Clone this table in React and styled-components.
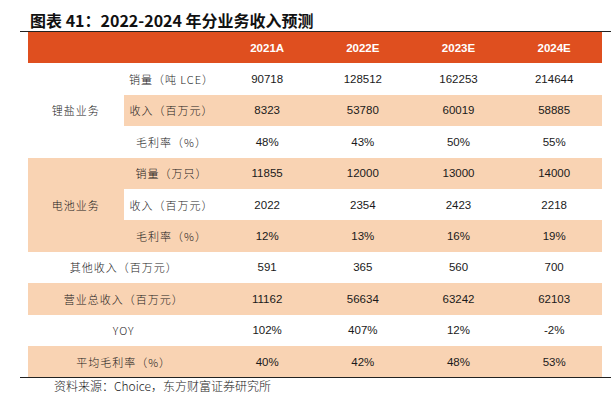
import React from 'react';
import styled, { createGlobalStyle } from 'styled-components';

const GlobalStyle = createGlobalStyle`
  body {
    margin: 0;
    background: #ffffff;
  }
`;

const Page = styled.div`
  width: 615px;
  height: 406px;
  padding-left: 20px;
  box-sizing: border-box;
`;

const Title = styled.h1`
  margin: 0;
  height: 31px;
  box-sizing: border-box;
  padding: 9px 0 0 10px;
  font-family: "Noto Sans CJK SC", "Noto Sans", sans-serif;
  font-size: 16px;
  font-weight: 700;
  line-height: 22px;
  color: #111;
  white-space: nowrap;
`;

const Frame = styled.div`
  width: 591px;
  border-top: 1px solid #222;
  border-bottom: 1px solid #222;
  padding-left: 8px;
  box-sizing: border-box;
`;

const Grid = styled.div`
  width: 574px;
  display: grid;
  grid-template-columns: repeat(6, 1fr);
  grid-auto-rows: 31.4px;
`;

const Head = styled.div`
  background: #df4f1f;
  color: #ffffff;
  font-family: "Liberation Sans", Arial, sans-serif;
  font-weight: 700;
  font-size: 11.5px;
  display: flex;
  align-items: center;
  justify-content: center;
`;

const Cell = styled.div`
  grid-column: ${p => (p.$span ? `span ${p.$span}` : 'auto')};
  grid-row: ${p => (p.$rows ? `span ${p.$rows}` : 'auto')};
  background: ${p => (p.$shade ? '#f9d3b3' : '#ffffff')};
  display: flex;
  align-items: center;
  justify-content: center;
  color: #1a1a1a;
  white-space: nowrap;
`;

const Label = styled(Cell)`
  font-family: "Noto Sans CJK SC", "Noto Sans", sans-serif;
  font-weight: 300;
  font-size: 11px;
  letter-spacing: 1px;
`;

const Num = styled(Cell)`
  font-family: "Liberation Sans", Arial, sans-serif;
  font-size: 11.5px;
`;

const Source = styled.div`
  padding-left: 34px;
  font-family: "Noto Sans CJK SC", "Noto Sans", sans-serif;
  font-weight: 300;
  font-size: 12px;
  line-height: 16px;
  color: #1a1a1a;
`;

const years = ['2021A', '2022E', '2023E', '2024E'];

const groups = [
  {
    name: '锂盐业务',
    shade: false,
    rows: [
      { label: '销量（吨 LCE）', values: ['90718', '128512', '162253', '214644'], shade: false },
      { label: '收入（百万元）', values: ['8323', '53780', '60019', '58885'], shade: true },
      { label: '毛利率（%）', values: ['48%', '43%', '50%', '55%'], shade: false },
    ],
  },
  {
    name: '电池业务',
    shade: true,
    rows: [
      { label: '销量（万只）', values: ['11855', '12000', '13000', '14000'], shade: true },
      { label: '收入（百万元）', values: ['2022', '2354', '2423', '2218'], shade: false },
      { label: '毛利率（%）', values: ['12%', '13%', '16%', '19%'], shade: true },
    ],
  },
];

const totals = [
  { label: '其他收入（百万元）', values: ['591', '365', '560', '700'], shade: false },
  { label: '营业总收入（百万元）', values: ['11162', '56634', '63242', '62103'], shade: true },
  { label: 'YOY', values: ['102%', '407%', '12%', '-2%'], shade: false, latin: true },
  { label: '平均毛利率（%）', values: ['40%', '42%', '48%', '53%'], shade: true },
];

export default function App() {
  return (
    <Page>
      <GlobalStyle />
      <Title>图表 41：2022-2024 年分业务收入预测</Title>
      <Frame>
        <Grid>
          <Head />
          <Head />
          {years.map(y => <Head key={y}>{y}</Head>)}

          {groups.map(g => (
            <React.Fragment key={g.name}>
              {g.rows.map((r, i) => (
                <React.Fragment key={r.label}>
                  {i === 0 && <Label $rows={3} $shade={g.shade}>{g.name}</Label>}
                  <Label $shade={r.shade}>{r.label}</Label>
                  {r.values.map((v, j) => <Num key={j} $shade={r.shade}>{v}</Num>)}
                </React.Fragment>
              ))}
            </React.Fragment>
          ))}

          {totals.map(r => (
            <React.Fragment key={r.label}>
              <Label $span={2} $shade={r.shade}>{r.label}</Label>
              {r.values.map((v, j) => <Num key={j} $shade={r.shade}>{v}</Num>)}
            </React.Fragment>
          ))}
        </Grid>
      </Frame>
      <Source>资料来源：Choice，东方财富证券研究所</Source>
    </Page>
  );
}
